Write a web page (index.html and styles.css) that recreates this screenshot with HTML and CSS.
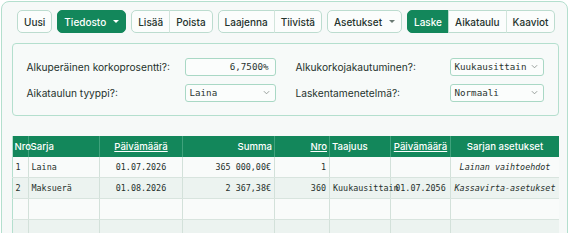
FILE: index.html
```html
<!DOCTYPE html>
<html lang="fi">
<head>
<meta charset="utf-8">
<link rel="stylesheet" href="styles.css">
</head>
<body>
<div class="panel">
  <div class="toolbar">
    <button class="btn">Uusi</button>
    <button class="btn primary">Tiedosto <span class="caret"></span></button>
    <div class="group">
      <button class="btn">Lisää</button>
      <button class="btn">Poista</button>
    </div>
    <div class="group">
      <button class="btn">Laajenna</button>
      <button class="btn">Tiivistä</button>
    </div>
    <button class="btn">Asetukset <span class="caret dark"></span></button>
    <div class="group">
      <button class="btn primary">Laske</button>
      <button class="btn">Aikataulu</button>
      <button class="btn">Kaaviot</button>
    </div>
  </div>

  <div class="form">
    <label class="lbl">Alkuperäinen korkoprosentti?:</label>
    <div class="field num">6,7500%</div>
    <span></span>
    <label class="lbl">Alkukorkojakautuminen?:</label>
    <div class="field sel">Kuukausittain<svg class="chev" viewBox="0 0 8 5"><path d="M1 1l3 3 3-3"/></svg></div>

    <label class="lbl">Aikataulun tyyppi?:</label>
    <div class="field sel">Laina<svg class="chev" viewBox="0 0 8 5"><path d="M1 1l3 3 3-3"/></svg></div>
    <span></span>
    <label class="lbl">Laskentamenetelmä?:</label>
    <div class="field sel">Normaali<svg class="chev" viewBox="0 0 8 5"><path d="M1 1l3 3 3-3"/></svg></div>
  </div>

  <table class="grid">
    <colgroup>
      <col class="c1"><col class="c2"><col class="c3"><col class="c4"><col class="c5"><col class="c6"><col class="c7"><col class="c8">
    </colgroup>
    <thead>
      <tr>
        <th class="l">Nro</th>
        <th class="l">Sarja</th>
        <th class="c"><u>Päivämäärä</u></th>
        <th class="r">Summa</th>
        <th class="r"><u>Nro</u></th>
        <th class="l">Taajuus</th>
        <th class="c"><u>Päivämäärä</u></th>
        <th class="c">Sarjan asetukset</th>
      </tr>
    </thead>
    <tbody>
      <tr>
        <td class="l">1</td><td class="l">Laina</td><td class="c">01.07.2026</td><td class="r">365 000,00€</td><td class="r">1</td><td class="l"></td><td class="c"></td><td class="c it">Lainan vaihtoehdot</td>
      </tr>
      <tr class="alt">
        <td class="l">2</td><td class="l">Maksuerä</td><td class="c">01.08.2026</td><td class="r">2 367,38€</td><td class="r">360</td><td class="l">Kuukausittain</td><td class="c">01.07.2056</td><td class="c it">Kassavirta-asetukset</td>
      </tr>
      <tr>
        <td></td><td></td><td></td><td></td><td></td><td></td><td></td><td></td>
      </tr>
      <tr class="alt">
        <td></td><td></td><td></td><td></td><td></td><td></td><td></td><td></td>
      </tr>
    </tbody>
  </table>
</div>
</body>
</html>
```

FILE: styles.css
```css
* { box-sizing: border-box; }
html, body { margin: 0; padding: 0; background: #ffffff; }
body {
  font-family: Inter, "Noto Sans", sans-serif;
  font-size: 12px;
  color: #1f2b26;
  height: 233px;
  overflow: hidden;
}
.panel {
  margin: 1px 0 0 1px;
  width: 567px;
  height: 260px;
  border: 1.5px solid #b4dfce;
  border-radius: 8px;
  background: #f6f9f8;
  padding: 7.5px 8.5px 0 9.5px;
}
.toolbar {
  display: flex;
  align-items: center;
  padding-left: 5.5px;
  height: 24px;
}
.toolbar > .btn, .toolbar > .group { margin-right: 5px; }
.btn {
  font-family: Inter, "Noto Sans", sans-serif;
  font-size: 10px;
  font-weight: 500;
  color: #24332c;
  background: #fbfdfc;
  border: 1px solid #bcdccf;
  border-radius: 5px;
  height: 23px;
  padding: 0 6px;
  display: inline-flex;
  align-items: center;
  gap: 7px;
  white-space: nowrap;
  cursor: pointer;
}
.btn.primary {
  background: #13875b;
  border-color: #13875b;
  color: #ffffff;
}
.group { display: flex; }
.group .btn { border-radius: 0; }
.group .btn + .btn { border-left: 1px solid #d2e5dc; margin-left: -1px; }
.group .btn.primary + .btn { border-left-color: #bcdccf; }
.group .btn:first-child { border-radius: 5px 0 0 5px; }
.group .btn:last-child { border-radius: 0 5px 5px 0; }
.caret {
  width: 0; height: 0;
  border-left: 3px solid transparent;
  border-right: 3px solid transparent;
  border-top: 3px solid #ffffff;
}
.caret.dark { border-top-color: #6b7a73; }

.form {
  margin-top: 9px;
  border: 1px solid #b4dfce;
  border-radius: 4px;
  background: #f7faf9;
  padding: 14px 14px 13px 14px;
  display: grid;
  grid-template-columns: 158px 91px 20px 154px 94px;
  row-gap: 8px;
  align-items: center;
}
.lbl {
  font-size: 10.2px;
  color: #25322c;
  white-space: nowrap;
}
.field {
  height: 18px;
  border: 1px solid #a9d8c5;
  border-radius: 3px;
  background: #fbfdfc;
  font-family: "DejaVu Sans Mono", monospace;
  font-size: 9.2px;
  color: #2a3530;
  display: flex;
  align-items: center;
  gap: 2px;
  padding: 0 5px 0 5px;
  white-space: nowrap;
}
.field.num { justify-content: flex-end; padding-right: 6px; }
.field.sel { justify-content: space-between; padding-left: 4px; }
.chev {
  width: 7px; height: 5px;
  fill: none;
  stroke: #8a948f;
  stroke-width: 1;
  flex: none;
}

.grid {
  margin-top: 20px;
  border-collapse: collapse;
  table-layout: fixed;
  width: 547px;
}
.c1 { width: 16px; }
.c2 { width: 71.5px; }
.c3 { width: 83px; }
.c4 { width: 92px; }
.c5 { width: 55px; }
.c6 { width: 61px; }
.c7 { width: 60px; }
.c8 { width: 108.5px; }
.grid th {
  background: #13875b;
  color: #ffffff;
  font-family: Inter, "Noto Sans", sans-serif;
  font-size: 9.6px;
  font-weight: 500;
  height: 21px;
  padding: 0 2px;
  border-left: 1px solid #3fa27c;
  white-space: nowrap;
  overflow: visible;
}
.grid th:first-child { border-left: 1px solid #b4dfce; }
.grid th u { text-decoration-thickness: 1px; text-underline-offset: 1px; }
.grid td {
  height: 21px;
  padding: 0 3px;
  font-family: "DejaVu Sans Mono", monospace;
  font-size: 8.4px;
  color: #26302c;
  border-left: 1px solid #d3e1da;
  border-bottom: 1px solid #d8e4de;
  white-space: nowrap;
  overflow: visible;
  background: #f9fbfa;
}
.grid td:first-child { border-left: 1px solid #b4dfce; }
.grid tr.alt td { background: #ecf3f0; }
.l { text-align: left; }
.c { text-align: center; }
.r { text-align: right; }
.it { font-style: italic; }
```
